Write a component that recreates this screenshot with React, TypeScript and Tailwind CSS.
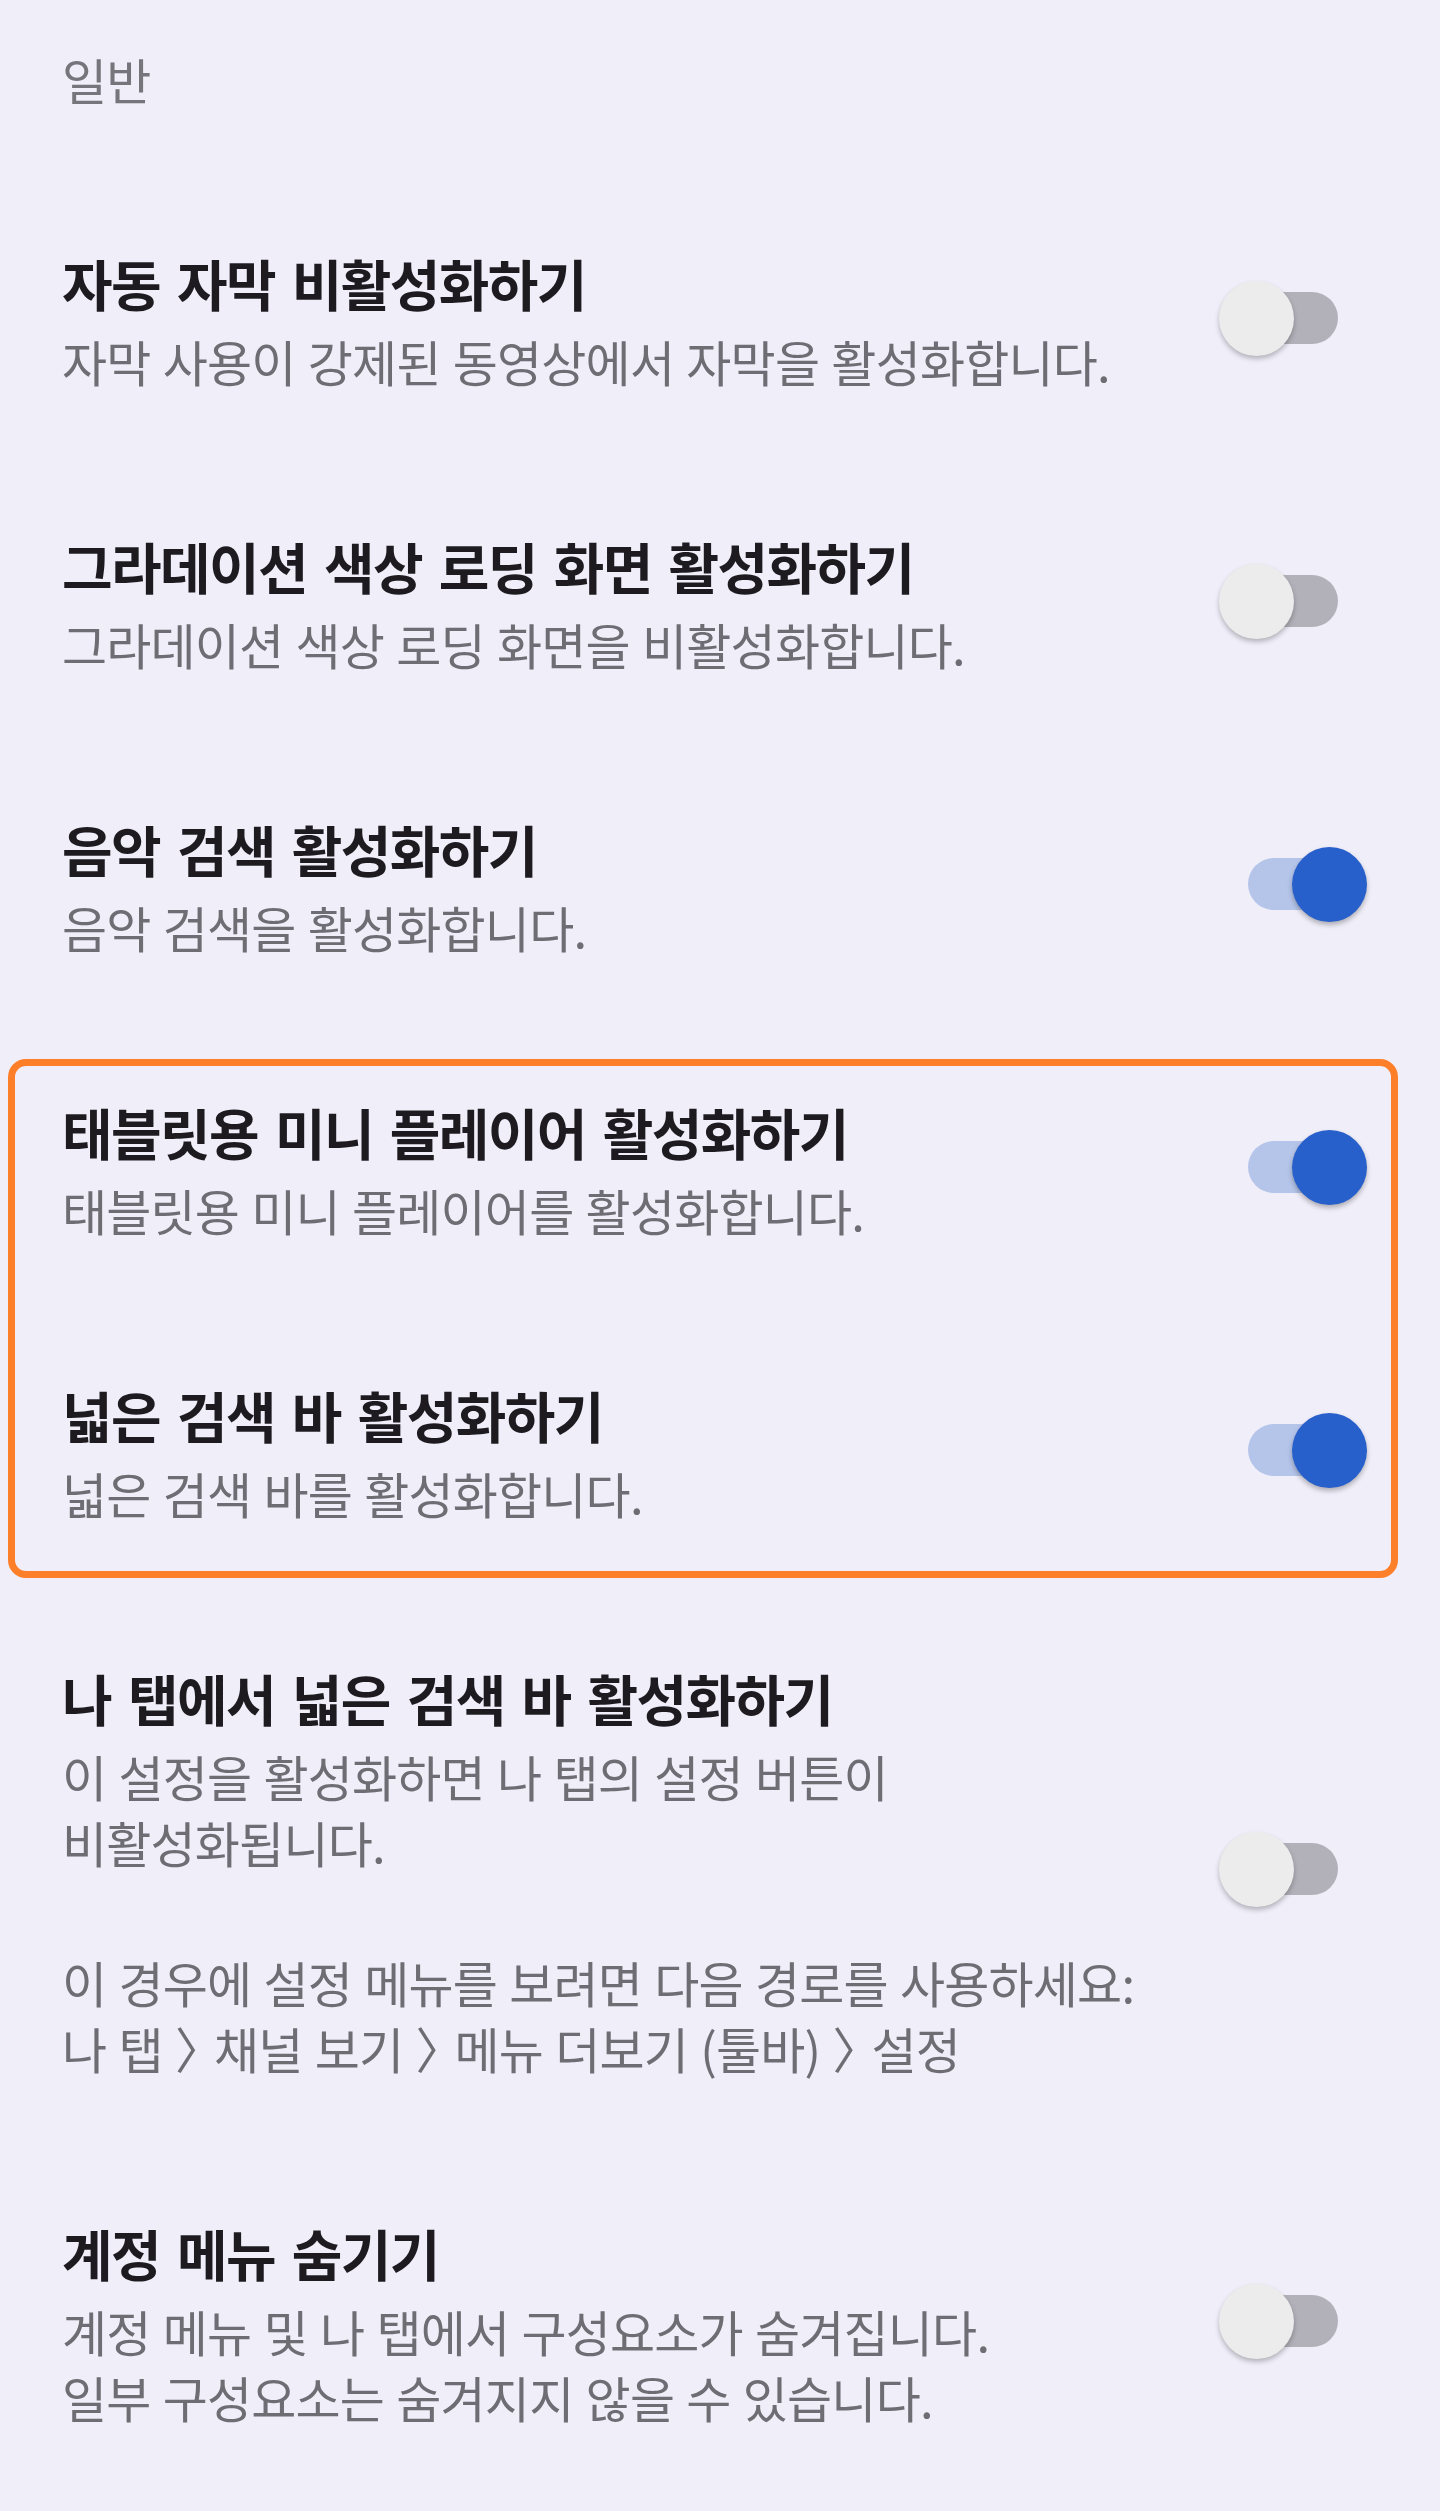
import React from "react";

const FONT = "[font-family:'Noto_Sans_CJK_KR','Noto_Sans',sans-serif]";

function Toggle({ on }: { on: boolean }) {
  return (
    <div className="relative mb-[8px] h-[52px] w-[90px] shrink-0">
      <div
        className={
          on
            ? "absolute inset-0 rounded-full bg-[#b5c5ea]"
            : "absolute inset-0 rounded-full bg-[#b2b1b9]"
        }
      />
      <div
        className={
          on
            ? "absolute left-[44px] top-[-11px] h-[75px] w-[75px] rounded-full bg-[#2860cb] shadow-[0_3px_5px_rgba(0,0,0,0.28)]"
            : "absolute left-[-29px] top-[-11px] h-[75px] w-[75px] rounded-full bg-[#ececec] shadow-[0_3px_5px_rgba(0,0,0,0.25)]"
        }
      />
    </div>
  );
}

type Item = {
  title: string;
  desc: React.ReactNode;
  on: boolean;
};

function Row({ title, desc, on }: Item) {
  return (
    <div className="flex items-center justify-between pl-[62px] pr-[102px] py-[69px]">
      <div className="flex flex-col">
        <div className="whitespace-nowrap text-[55px] leading-[66px] font-bold tracking-[-1.6px] [word-spacing:6px] text-[#1d1b20]">
          {title}
        </div>
        <div className="mt-[13px] text-[49px] leading-[66px] tracking-[-0.8px] [word-spacing:2px] text-[#6e6d74]">
          {desc}
        </div>
      </div>
      <Toggle on={on} />
    </div>
  );
}

function Line({ children }: { children: React.ReactNode }) {
  return <div className="whitespace-nowrap">{children}</div>;
}

function Chev() {
  return <span className="tracking-[-10px]">〉</span>;
}

export default function App() {
  return (
    <div className={`min-h-screen w-[1440px] bg-[#f0eef9] pb-[11px] ${FONT}`}>
      <div className="pl-[62px] pt-[46px] pb-[68px] text-[49px] leading-[66px] tracking-[-0.8px] text-[#76757c]">
        일반
      </div>

      <Row
        title="자동 자막 비활성화하기"
        desc={<Line>자막 사용이 강제된 동영상에서 자막을 활성화합니다.</Line>}
        on={false}
      />
      <Row
        title="그라데이션 색상 로딩 화면 활성화하기"
        desc={<Line>그라데이션 색상 로딩 화면을 비활성화합니다.</Line>}
        on={false}
      />
      <Row
        title="음악 검색 활성화하기"
        desc={<Line>음악 검색을 활성화합니다.</Line>}
        on={true}
      />

      <div className="relative">
        <Row
          title="태블릿용 미니 플레이어 활성화하기"
          desc={<Line>태블릿용 미니 플레이어를 활성화합니다.</Line>}
          on={true}
        />
        <Row
          title="넓은 검색 바 활성화하기"
          desc={<Line>넓은 검색 바를 활성화합니다.</Line>}
          on={true}
        />
        <div className="pointer-events-none absolute left-[8px] right-[42px] top-[30px] bottom-[17px] rounded-[18px] border-[7px] border-[#fe7f2a]" />
      </div>

      <Row
        title="나 탭에서 넓은 검색 바 활성화하기"
        desc={
          <>
            <Line>이 설정을 활성화하면 나 탭의 설정 버튼이</Line>
            <Line>비활성화됩니다.</Line>
            <div className="mt-[74px]">
              <Line>이 경우에 설정 메뉴를 보려면 다음 경로를 사용하세요:</Line>
              <Line>
                나 탭 <Chev />채널 보기 <Chev />메뉴 더보기 (툴바) <Chev />설정
              </Line>
            </div>
          </>
        }
        on={false}
      />
      <Row
        title="계정 메뉴 숨기기"
        desc={
          <>
            <Line>계정 메뉴 및 나 탭에서 구성요소가 숨겨집니다.</Line>
            <Line>일부 구성요소는 숨겨지지 않을 수 있습니다.</Line>
          </>
        }
        on={false}
      />
    </div>
  );
}
